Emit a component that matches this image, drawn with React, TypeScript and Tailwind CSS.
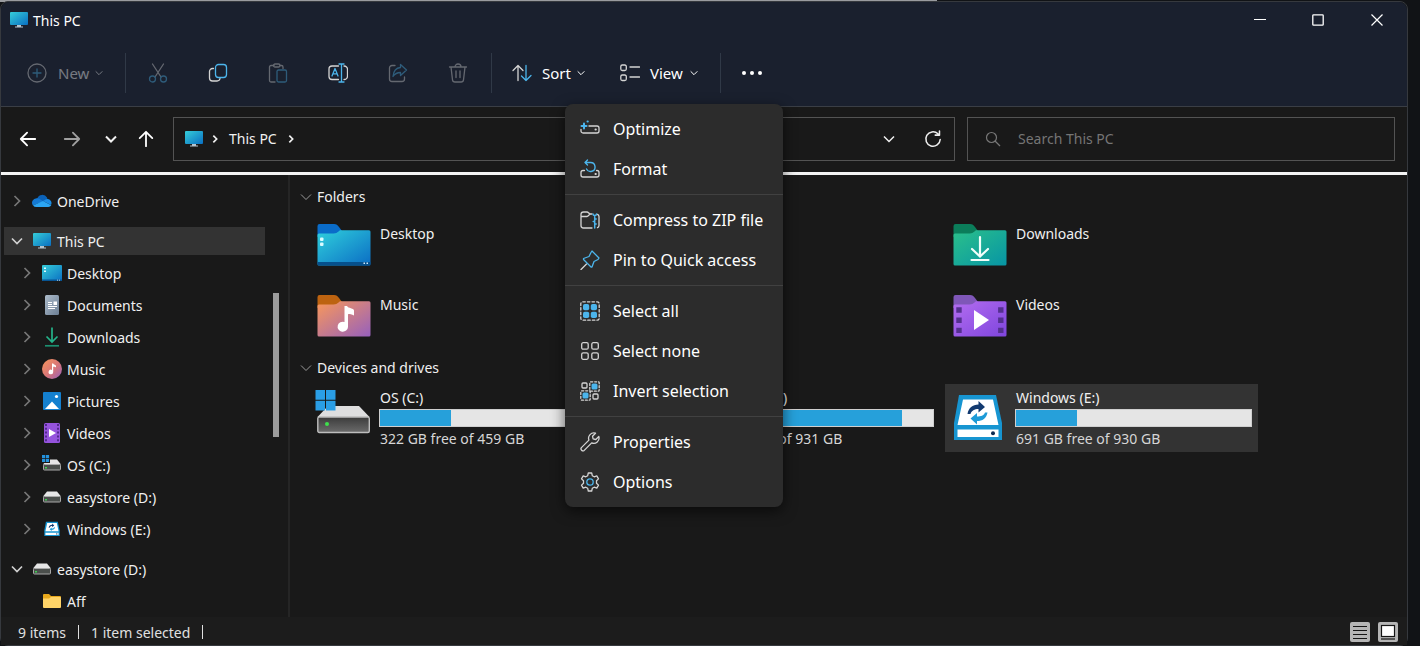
import type { ReactNode } from "react";

type IconProps = { className?: string };

const LINE = "#d4d4d4";
const BLUE = "#4cb5ec";

/* ---------- Small glyphs ---------- */

function Chevron({ className = "", dir = "down" }: IconProps & { dir?: "down" | "right" }) {
  return (
    <svg viewBox="0 0 12 12" className={className} fill="none" stroke="currentColor" aria-hidden="true">
      <path d={dir === "down" ? "M1 3.5 6 8.5 11 3.5" : "M3.5 1 8.5 6 3.5 11"} />
    </svg>
  );
}

function MonitorIcon({ className = "" }: IconProps) {
  return (
    <svg viewBox="0 0 20 18" className={className} aria-hidden="true">
      <defs>
        <linearGradient id="monitor" x1="0" y1="0" x2="1" y2="1">
          <stop offset="0" stopColor="#35cdd9" />
          <stop offset="1" stopColor="#0a6fc2" />
        </linearGradient>
      </defs>
      <rect x="1" y="1" width="18" height="13" rx="1" fill="url(#monitor)" />
      <path d="M8 14h4v1.5h2v1H6v-1h2z" fill="#b5c3cd" />
    </svg>
  );
}

function CloudIcon() {
  return (
    <svg viewBox="0 0 20 14" className="w-5 h-3.5" aria-hidden="true">
      <path d="M5.2 4.5A5.4 5.4 0 0 1 15 3.6l.6 2.2L9 9 2 9z" fill="#0b62b8" />
      <path d="M4.6 4.2A4.6 4.6 0 0 0 1 11.6L11 7.2 7.4 4.8a4.4 4.4 0 0 0-2.8-.6z" fill="#1479d3" />
      <path d="M11 7l2.6-1.5a4 4 0 0 1 2.4-.4A4 4 0 0 1 19 11z" fill="#1b8ce5" />
      <path d="M1 11.5 11 7l8.3 4.3A3.6 3.6 0 0 1 16.3 13H4.6A4.4 4.4 0 0 1 1 11.5z" fill="#2ba5f3" />
    </svg>
  );
}

function DesktopIcon() {
  return (
    <svg viewBox="0 0 20 16" className="w-5 h-4" aria-hidden="true">
      <rect width="20" height="16" rx="1" fill="url(#monitor)" />
      <path d="M2 2.5h2V4H2zM2 5.5h2V7H2z" fill="#e2fbff" />
      <path d="M0 14.5h20v.5a1 1 0 0 1-1 1H1a1 1 0 0 1-1-1z" fill="#075493" />
      <path d="M15 14.8h1v.8h-1zM17 14.8h1v.8h-1z" fill="#fff" />
    </svg>
  );
}

function DocumentIcon() {
  return (
    <svg viewBox="0 0 14 20" className="w-3.5 h-5" aria-hidden="true">
      <defs>
        <linearGradient id="doc" x1="0" y1="0" x2="1" y2="1">
          <stop offset="0" stopColor="#adbccb" />
          <stop offset="1" stopColor="#6c7f94" />
        </linearGradient>
      </defs>
      <rect width="14" height="20" rx="1.5" fill="url(#doc)" />
      <path d="M3 7.5h4M3 9.5h4M3 11.5h9M3 13.5h7" stroke="#fff" strokeWidth="1.2" />
      <rect x="8.5" y="6.5" width="3.5" height="3.5" fill="#fff" />
    </svg>
  );
}

function DownloadIcon() {
  return (
    <svg viewBox="0 0 14 20" className="w-3.5 h-5" fill="none" stroke="#25b38a" strokeWidth="1.7" aria-hidden="true">
      <path d="M7 .5v14M1.5 9.5 7 15l5.500-5.500" />
      <path d="M0 18.8h14" stroke="#1c8f70" />
    </svg>
  );
}

function MusicIcon() {
  return (
    <svg viewBox="0 0 20 20" className="size-5" aria-hidden="true">
      <defs>
        <linearGradient id="music" x1="0" y1="0" x2="1" y2="1">
          <stop offset="0" stopColor="#f9975b" />
          <stop offset=".55" stopColor="#d77579" />
          <stop offset="1" stopColor="#9561c0" />
        </linearGradient>
      </defs>
      <circle cx="10" cy="10" r="10" fill="url(#music)" />
      <path d="M10 4.5h1.2c.3 1.2 2.8 1 2.8 2.5v1.5c-.8-.8-2-.8-2.8-.8V13a2.300 2.300 0 1 1-1.200-2z" fill="#fff" />
    </svg>
  );
}

function PictureIcon() {
  return (
    <svg viewBox="0 0 18 18" className="size-[18px]" aria-hidden="true">
      <rect width="18" height="18" rx="1" fill="#1480cf" />
      <path d="M2 17 9 9.500l7 7.500z" fill="#fff" />
      <circle cx="13.5" cy="4.5" r="1.6" fill="#fff" />
    </svg>
  );
}

function VideoIcon() {
  return (
    <svg viewBox="0 0 16 20" className="w-4 h-5" aria-hidden="true">
      <rect width="16" height="20" rx="1.5" fill="#9553dd" />
      <path d="M2 1v18M14 1v18" stroke="#4b2585" strokeWidth="1.8" strokeDasharray="2 1.8" />
      <path d="M5 6v8l7-4z" fill="#fff" />
    </svg>
  );
}

function SmallDriveIcon({ windows = false }: { windows?: boolean }) {
  return (
    <svg viewBox="0 0 20 20" className="size-5" aria-hidden="true">
      <path d="M5 4.500h10l4 5H1z" fill="#e6e6e6" />
      <rect x="1.5" y="9.5" width="17" height="5.5" rx=".8" fill="#4b4f4c" stroke="#a9a9a9" />
      <rect x="3" y="12" width="2" height="1.5" fill="#3ecf52" />
      {windows && (
        <>
          <rect width="8" height="8" fill="#191919" />
          <path d="M0 0h3.200v3.200H0zM3.900 0h3.200v3.200H3.900zM0 3.900h3.200v3.200H0zM3.900 3.900h3.200v3.200H3.900z" fill="#2492dd" />
        </>
      )}
    </svg>
  );
}

function SyncDriveIcon({ className = "" }: IconProps) {
  return (
    <svg viewBox="0 0 50 46" className={className} aria-hidden="true">
      <path d="M6 0h37l6 28v17H1V28z" fill="#1795d1" />
      <path d="M10 4.500h30l5.500 25.500H4.500zM4.500 34.500h41v7.500h-41z" fill="#fff" />
      <circle cx="40" cy="38.3" r="2" fill="#0c2a52" />
      <path d="M14.500 19c1-6 5-9.500 11-9.500V6L32 12l-6.500 5.500V14c-4 0-7 1.500-8 5z" fill="#123a70" />
      <path d="M34.500 17.500c-1 6-5 8.500-10.500 8.500v3.500L17.500 23.500 24 18v3.500c4 0 7-1 8-4z" fill="#1e9bd7" />
    </svg>
  );
}

function FolderIcon() {
  return (
    <svg viewBox="0 0 18 14" className="w-[18px] h-3.5" aria-hidden="true">
      <path d="M0 1a1 1 0 0 1 1-1h5l2 2h9a1 1 0 0 1 1 1v3H0z" fill="#e8a81c" />
      <path d="M0 4.500h6L8 3h9a1 1 0 0 1 1 1v9a1 1 0 0 1-1 1H1a1 1 0 0 1-1-1z" fill="#ffd468" />
    </svg>
  );
}

/* ---------- Large tile art ---------- */

const FOLDER_COLORS = {
  desktop: { tab: "#0a6cc9", from: "#2fcfdc", to: "#0b6dc4" },
  documents: { tab: "#5d7186", from: "#a9b9c9", to: "#6c7f94" },
  downloads: { tab: "#0b7d5a", from: "#2bc08a", to: "#0795a5" },
  music: { tab: "#bd6310", from: "#f9985a", to: "#9660bd" },
  pictures: { tab: "#0a5ba8", from: "#2ba3ec", to: "#0f6ec0" },
  videos: { tab: "#7f57b8", from: "#b36df0", to: "#7f45dd" },
};

type FolderKind = keyof typeof FOLDER_COLORS;

function BigFolder({ kind }: { kind: FolderKind }) {
  const c = FOLDER_COLORS[kind];
  return (
    <svg viewBox="0 0 54 42" className="w-[54px] h-[42px]" aria-hidden="true">
      <defs>
        <linearGradient id={`folder-${kind}`} x1="0" y1="0" x2="1" y2="1">
          <stop offset="0" stopColor={c.from} />
          <stop offset="1" stopColor={c.to} />
        </linearGradient>
      </defs>
      <path d="M.5 2a2 2 0 0 1 2-2h14.500c2.500 0 3.500 1 5 3l3 4-3 6H.5z" fill={c.tab} />
      <path
        d="M.5 11a1.500 1.500 0 0 1 1.500-1.500h14.500c2.500 0 3.500-.7 5-2L23 6.300h29a1.500 1.500 0 0 1 1.500 1.500V40a1.500 1.500 0 0 1-1.500 1.500H2A1.500 1.500 0 0 1 .5 40z"
        fill={`url(#folder-${kind})`}
      />
      {kind === "desktop" && (
        <>
          <path d="M.5 38h53v2a1.500 1.500 0 0 1-1.500 1.500H2A1.500 1.500 0 0 1 .5 40z" fill="#06508c" />
          <rect x="3" y="13.5" width="3.5" height="3.5" rx="1" fill="#d9fbff" />
          <rect x="3" y="18.5" width="3.5" height="3.5" rx="1" fill="#d9fbff" />
          <path d="M46.500 38.500H48V40h-1.500zM49.500 38.500H51V40h-1.500z" fill="#cde9ff" />
        </>
      )}
      {kind === "downloads" && (
        <path d="M27 13v19M19 25l8 7.500 8-7.500M18.500 36h17" fill="none" stroke="#f2fffb" strokeWidth="2.2" strokeLinecap="round" />
      )}
      {kind === "music" && (
        <path d="M27.500 11h2.500c1 2.500 7 2 7 4.500V20.500c-2-1.500-4.500-1.200-6-1.500v13a5.200 5 0 1 1-3.500-5z" fill="#fff" />
      )}
      {kind === "videos" && (
        <>
          <path d="M6 12.300v28M47.800 12.300v28" stroke="#54308f" strokeWidth="5.4" strokeDasharray="5.4 4.8" />
          <path d="M21 15v20l15-10z" fill="#fff" />
        </>
      )}
    </svg>
  );
}

function BigDrive({ windows = false }: { windows?: boolean }) {
  return (
    <svg viewBox="0 0 56 46" className="w-14 h-[46px]" aria-hidden="true">
      <defs>
        <linearGradient id="drive-front" x1="0" y1="0" x2="0" y2="1">
          <stop offset="0" stopColor="#3b3b3b" />
          <stop offset="1" stopColor="#6b6b6b" />
        </linearGradient>
      </defs>
      <path d="M13 16h31l10.500 11H2.500z" fill="#dededf" />
      <rect x="2.8" y="27" width="51.5" height="15.5" rx="1.5" fill="url(#drive-front)" stroke="#bdbdbd" strokeWidth="1.4" />
      <circle cx="12" cy="34" r="2" fill="#3ee04c" />
      {windows && <path d="M.5 0H10v9.700H.5zM11 0h9.500v9.700H11zM.5 10.700H10v9.700H.5zM11 10.700h9.500v9.700H11z" fill="#2a9ee6" />}
    </svg>
  );
}

/* ---------- Command bar and menu icons ---------- */

function Line({ children, className = "size-5" }: { children: ReactNode; className?: string }) {
  return (
    <svg viewBox="0 0 20 20" className={className} fill="none" stroke={LINE} strokeWidth="1.3" strokeLinecap="round" strokeLinejoin="round" aria-hidden="true">
      {children}
    </svg>
  );
}

const CutIcon = (
  <Line>
    <path d="M4.500 1 13 14M15.500 1 7 14" />
    <circle cx="4.500" cy="16" r="3" stroke={BLUE} />
    <circle cx="15.500" cy="16" r="3" stroke={BLUE} />
  </Line>
);

const CopyIcon = (
  <Line>
    <path d="M5.500 5.500h-1a3 3 0 0 0-3 3V15a3 3 0 0 0 3 3H9a3 3 0 0 0 3-2.500" />
    <rect x="7.5" y="1.5" width="11" height="13" rx="3" stroke={BLUE} />
  </Line>
);

const PasteIcon = (
  <Line>
    <path d="M6 2.500H3A1.500 1.500 0 0 0 1.500 4v13.500A1.500 1.500 0 0 0 3 19h4M12 2.500h1.500A1.500 1.500 0 0 1 15 4v1.500" />
    <rect x="5.5" y="1" width="6.5" height="3" rx="1.5" />
    <rect x="9" y="7" width="9.5" height="12" rx="1.5" stroke={BLUE} />
  </Line>
);

const RenameIcon = (
  <Line>
    <path d="M10.500 3H4a3 3 0 0 0-3 3v7.500a3 3 0 0 0 3 3h6.500M16 3a3.500 3.500 0 0 1 3.500 3.500V13a3.500 3.500 0 0 1-3.500 3.500" />
    <path d="M4 13 7 5.500 10 13M5 10.800h4M13.500 1v18M11 1h5M11 19h5" stroke={BLUE} />
  </Line>
);

const ShareIcon = (
  <Line>
    <path d="M7 2.500H4A2.500 2.500 0 0 0 1.500 5v11A2.500 2.500 0 0 0 4 18.500h10a2.500 2.500 0 0 0 2.500-2.500v-2" />
    <path d="M12.500 1.500 18.500 7l-6 5.500V9.500C9 9.500 7 10.500 5 13.500 5.500 8 8.500 4.800 12.500 4.500z" stroke={BLUE} />
  </Line>
);

const TrashIcon = (
  <Line>
    <path d="M1.500 4h17M3 4l1.500 12.800A2.500 2.500 0 0 0 7 19h6a2.500 2.500 0 0 0 2.500-2.200L17 4M7 4a3 3 0 0 1 6 0M8 8v6.500M12 8v6.500" />
  </Line>
);

const MENU_GROUPS: { label: string; icon: ReactNode }[][] = [
  [
    {
      label: "Optimize",
      icon: (
        <Line>
          <path d="M9 7h8a2 2 0 0 1 2 2v3a2 2 0 0 1-2 2H3a2 2 0 0 1-2-2v-1.500" />
          <path d="M15.500 10.500h.3" strokeWidth="2" />
          <path d="M4 4.500v5M1.500 7h5M7.500 2.500h.3" stroke={BLUE} strokeWidth="2" />
        </Line>
      ),
    },
    {
      label: "Format",
      icon: (
        <Line>
          <path d="M4.500 11.500H3a2 2 0 0 0-2 2V16a2 2 0 0 0 2 2h14a2 2 0 0 0 2-2v-2.500a2 2 0 0 0-2-2h-.5" />
          <path d="M15.500 15h.3" strokeWidth="2" />
          <path d="M5 3.500h5.500a4.500 4.500 0 1 1-4 6.500M7.500 1 5 3.500 7.500 6" stroke={BLUE} strokeWidth="1.4" />
        </Line>
      ),
    },
  ],
  [
    {
      label: "Compress to ZIP file",
      icon: (
        <Line>
          <path d="M12 18H3.500A2.500 2.500 0 0 1 1 15.500v-11A2.500 2.500 0 0 1 3.500 2H7c1.500 0 2 2 3.500 2H12M1 6.500h6c1.500 0 2-2.500 3.500-2.500M17.500 4.300A2.500 2.500 0 0 1 19 6.500v9a2.500 2.500 0 0 1-1.500 2.200" />
          <path d="M13 4c0 2 3.500 2 3.500 0M14.700 5.500V18M14.700 9h1.500M13.200 11.500h1.500M14.700 14h1.500" stroke={BLUE} strokeWidth="1.5" />
        </Line>
      ),
    },
    {
      label: "Pin to Quick access",
      icon: (
        <Line>
          <path d="M1 19.500 6.500 14" />
          <path d="M12 1 19 8l-1 1.500-4 2-2 5.500h-1L3.500 9.500v-1L9 6.500l2-4z" stroke={BLUE} />
        </Line>
      ),
    },
  ],
  [
    {
      label: "Select all",
      icon: (
        <Line>
          <rect x=".8" y=".8" width="18.4" height="18.4" rx="2" strokeDasharray="2.5 2.1" />
          <rect x="3" y="3" width="6.2" height="6.2" rx="1.8" fill={BLUE} stroke="none" />
          <rect x="10.800" y="3" width="6.2" height="6.2" rx="1.8" fill={BLUE} stroke="none" />
          <rect x="3" y="10.8" width="6.2" height="6.2" rx="1.8" fill={BLUE} stroke="none" />
          <rect x="10.8" y="10.8" width="6.2" height="6.2" rx="1.8" fill={BLUE} stroke="none" />
        </Line>
      ),
    },
    {
      label: "Select none",
      icon: (
        <Line>
          <rect x="1.7" y="1.7" width="6.5" height="6.5" rx="1.5" />
          <rect x="11.8" y="1.7" width="6.5" height="6.5" rx="1.5" />
          <rect x="1.7" y="11.8" width="6.5" height="6.5" rx="1.5" />
          <rect x="11.8" y="11.8" width="6.5" height="6.5" rx="1.5" />
        </Line>
      ),
    },
    {
      label: "Invert selection",
      icon: (
        <Line>
          <rect x="2" y="2" width="5" height="5" rx="1" />
          <rect x="13" y="13" width="5" height="5" rx="1" />
          <rect x="9.8" y=".8" width="9.4" height="9.4" rx="1" strokeDasharray="2 1.9" />
          <rect x=".8" y="9.8" width="9.4" height="9.4" rx="1" strokeDasharray="2 1.9" />
          <rect x="11.5" y="2.5" width="6" height="6" rx="1.5" fill={BLUE} stroke="none" />
          <rect x="2.5" y="11.5" width="6" height="6" rx="1.5" fill={BLUE} stroke="none" />
        </Line>
      ),
    },
  ],
  [
    {
      label: "Properties",
      icon: (
        <Line>
          <path d="M15.500 1.200 12.500 4.200l.6 2.700 2.700.6 3-3a5.300 5.300 0 0 1-7.100 6.400l-7.500 7.500a2 2 0 0 1-2.800-2.800l7.500-7.500A5.300 5.300 0 0 1 15.500 1.200z" />
        </Line>
      ),
    },
    {
      label: "Options",
      icon: (
        <Line>
          <path d="M8.300 1h3.400l.6 2.700 1.900 1.100 2.600-.9 1.700 3-2 1.900v2.400l2 1.900-1.700 3-2.600-.9-1.900 1.100-.6 2.700H8.300l-.6-2.700-1.900-1.100-2.600.9-1.700-3 2-1.900V8.800l-2-1.900 1.700-3 2.600.9 1.900-1.100z" />
          <circle cx="10" cy="10" r="3.2" stroke={BLUE} />
        </Line>
      ),
    },
  ],
];

/* ---------- Data ---------- */

const TREE: { label: string; icon: ReactNode; level: 0 | 1; open?: boolean; selected?: boolean; leaf?: boolean }[][] = [
  [{ label: "OneDrive", icon: <CloudIcon />, level: 0 }],
  [
    { label: "This PC", icon: <MonitorIcon className="w-5 h-[18px]" />, level: 0, open: true, selected: true },
    { label: "Desktop", icon: <DesktopIcon />, level: 1 },
    { label: "Documents", icon: <DocumentIcon />, level: 1 },
    { label: "Downloads", icon: <DownloadIcon />, level: 1 },
    { label: "Music", icon: <MusicIcon />, level: 1 },
    { label: "Pictures", icon: <PictureIcon />, level: 1 },
    { label: "Videos", icon: <VideoIcon />, level: 1 },
    { label: "OS (C:)", icon: <SmallDriveIcon windows />, level: 1 },
    { label: "easystore (D:)", icon: <SmallDriveIcon />, level: 1 },
    { label: "Windows (E:)", icon: <SyncDriveIcon className="w-4 h-4" />, level: 1 },
  ],
  [
    { label: "easystore (D:)", icon: <SmallDriveIcon />, level: 0, open: true },
    { label: "Aff", icon: <FolderIcon />, level: 1, leaf: true },
  ],
];

const FOLDERS: { label: string; kind: FolderKind }[] = [
  { label: "Desktop", kind: "desktop" },
  { label: "Documents", kind: "documents" },
  { label: "Downloads", kind: "downloads" },
  { label: "Music", kind: "music" },
  { label: "Pictures", kind: "pictures" },
  { label: "Videos", kind: "videos" },
];

const DRIVES = [
  { label: "OS (C:)", free: "322 GB free of 459 GB", used: 30, icon: <BigDrive windows /> },
  { label: "easystore (D:)", free: "121 GB free of 931 GB", used: 87, icon: <BigDrive /> },
  { label: "Windows (E:)", free: "691 GB free of 930 GB", used: 26, icon: <SyncDriveIcon className="mt-[5px] ml-0.5 w-[50px] h-[46px]" />, selected: true },
];

const TOOLS = [
  { label: "Cut", icon: CutIcon, disabled: true },
  { label: "Copy", icon: CopyIcon },
  { label: "Paste", icon: PasteIcon, disabled: true },
  { label: "Rename", icon: RenameIcon },
  { label: "Share", icon: ShareIcon, disabled: true },
  { label: "Delete", icon: TrashIcon, disabled: true },
];

/* ---------- Sections ---------- */

function TitleBar() {
  return (
    <div className="flex h-9 items-center pl-2 text-white">
      <MonitorIcon className="w-5 h-[18px]" />
      <h1 className="ml-1 text-[14px]">This PC</h1>
      <div className="ml-auto flex h-full">
        <button aria-label="Minimize" className="flex w-[58px] items-center justify-center">
          <svg viewBox="0 0 12 12" className="size-3" stroke="currentColor"><path d="M0 5.500h12" /></svg>
        </button>
        <button aria-label="Maximize" className="flex w-[58px] items-center justify-center">
          <svg viewBox="0 0 12 12" className="size-3" fill="none" stroke="currentColor" strokeWidth="1.3"><rect x=".8" y=".8" width="10.4" height="10.4" rx=".8" /></svg>
        </button>
        <button aria-label="Close" className="flex w-[60px] items-center justify-center">
          <svg viewBox="0 0 12 12" className="size-3" stroke="currentColor" strokeWidth="1.2"><path d="M.5.5l11 11M11.500.5l-11 11" /></svg>
        </button>
      </div>
    </div>
  );
}

function Toolbar() {
  return (
    <div className="flex h-[68px] items-center pt-0.5 pl-[15px] text-[15px] text-white">
      <button disabled className="flex h-10 w-[109px] items-center pl-[11px] opacity-40">
        <Line>
          <circle cx="10" cy="10" r="9" />
          <path d="M10 6v8M6 10h8" stroke={BLUE} />
        </Line>
        <span className="ml-[11px]">New</span>
        <Chevron className="ml-1.5 size-2 stroke-[1.5]" />
      </button>
      <span className="h-10 w-px bg-[#303947]" />
      <div className="flex px-0.5">
        {TOOLS.map((tool) => (
          <button key={tool.label} aria-label={tool.label} disabled={tool.disabled} className="flex h-10 w-[60px] items-center justify-center disabled:opacity-40">
            {tool.icon}
          </button>
        ))}
      </div>
      <span className="ml-px h-10 w-px bg-[#303947]" />
      <button className="ml-2 flex h-10 w-[108px] items-center pl-3">
        <Line>
          <path d="M6 17.500v-15M1 7.500l5-5 5 5" />
          <path d="M14 2.500v15M9.500 13l4.500 4.500 5-5" stroke={BLUE} />
        </Line>
        <span className="ml-2.5">Sort</span>
        <Chevron className="ml-1.5 size-2 stroke-[1.5]" />
      </button>
      <button className="flex h-10 w-[108px] items-center pl-3">
        <Line>
          <rect x=".8" y="2" width="5.5" height="5.5" rx="1.5" />
          <rect x=".8" y="12" width="5.5" height="5.5" rx="1.5" />
          <path d="M10 4h9.500M10 14h9.500" />
        </Line>
        <span className="ml-2.5">View</span>
        <Chevron className="ml-[7px] size-2 stroke-[1.5]" />
      </button>
      <span className="ml-1 h-10 w-px bg-[#303947]" />
      <button aria-label="See more" aria-haspopup="menu" aria-expanded="true" className="ml-2 flex h-10 w-[46px] items-center justify-center">
        <svg viewBox="0 0 20 4" className="h-1 w-5" fill="currentColor">
          <circle cx="2" cy="2" r="2" />
          <circle cx="10" cy="2" r="2" />
          <circle cx="18" cy="2" r="2" />
        </svg>
      </button>
    </div>
  );
}

function AddressRow() {
  return (
    <div className="flex h-[65px] items-center pr-3 pb-0.5 text-[14px] text-[#f1f1f1]">
      <div className="flex w-[172px] items-center pl-[18px]">
        <button aria-label="Back" className="w-[44px]">
          <Line className="size-[18px]"><path d="M18 10H2M9 3l-7 7 7 7" stroke="#fff" strokeWidth="2" /></Line>
        </button>
        <button aria-label="Forward" className="w-[42px]">
          <Line className="size-[18px]"><path d="M2 10h16M11 3l7 7-7 7" stroke="#a0a0a0" strokeWidth="2" /></Line>
        </button>
        <button aria-label="Recent locations" className="w-[32px]">
          <Chevron className="size-3 stroke-2" />
        </button>
        <button aria-label="Up">
          <Line className="size-[18px]"><path d="M10 18V2M3 9l7-7 7 7" stroke="#fff" strokeWidth="2" /></Line>
        </button>
      </div>
      <div className="flex h-11 flex-1 items-center border border-[#535353] pl-2.5">
        <MonitorIcon className="w-5 h-[18px]" />
        <Chevron dir="right" className="ml-[7px] size-2 stroke-[2.5]" />
        <a href="#this-pc" className="mx-2.5">This PC</a>
        <Chevron dir="right" className="size-2 stroke-[2.5]" />
        <button aria-label="Previous locations" className="ml-auto w-[41px]">
          <Chevron className="size-3 stroke-[1.5]" />
        </button>
        <button aria-label="Refresh" className="w-[30px]">
          <Line className="size-[18px]">
            <path d="M18 10.500A8 8 0 1 1 15.500 4.200L17 5.500M17.200 1v4.700h-4.700" stroke="#eee" strokeWidth="1.7" />
          </Line>
        </button>
      </div>
      <label className="ml-3 flex h-11 w-[428px] items-center border border-[#535353] pl-[17px]">
        <svg viewBox="0 0 16 16" className="size-4" fill="none" stroke="#777" strokeWidth="1.2" aria-hidden="true">
          <circle cx="6.5" cy="6.5" r="5" />
          <path d="m10 10 5 5" />
        </svg>
        <input aria-label="Search This PC" placeholder="Search This PC" className="ml-[17px] min-w-0 flex-1 bg-transparent outline-none placeholder:text-[#757575]" />
      </label>
    </div>
  );
}

function Sidebar() {
  return (
    <aside className="flex w-[289px] shrink-0 border-r-2 border-[#252525] pl-[3px]">
      <nav className="w-[261px] space-y-2 pt-2.5 text-[14px]">
        {TREE.map((group, i) => (
          <ul key={i}>
            {group.map((item) => (
              <li key={item.label} className="py-0.5">
                <button
                  className={`flex h-7 w-full items-center gap-[5px] text-left ${item.level ? "pl-[15px]" : "pl-[5px]"} ${
                    item.selected ? "bg-[#333333]" : ""
                  }`}
                >
                  <span className={`flex w-[18px] pl-0.5 ${item.open ? "text-[#d0d0d0]" : "text-[#777]"}`}>
                    {!item.leaf && <Chevron dir={item.open ? "down" : "right"} className="size-3 stroke-[1.7]" />}
                  </span>
                  <span className="flex w-5 shrink-0 justify-center">{item.icon}</span>
                  <span>{item.label}</span>
                </button>
              </li>
            ))}
          </ul>
        ))}
      </nav>
      <div className="mt-[118px] ml-2 h-36 w-1.5 bg-[#9b9b9b]" />
    </aside>
  );
}

function SectionTitle({ children }: { children: ReactNode }) {
  return (
    <h2 className="mb-1.5 flex h-5 items-center gap-[5px] pl-2.5 text-[14px]">
      <Chevron className="size-3 text-[#9a9a9a]" />
      {children}
    </h2>
  );
}

function Content() {
  return (
    <main className="flex-1 pt-3 text-[14px] leading-5">
      <SectionTitle>Folders</SectionTitle>
      <div className="mb-1.5 grid grid-cols-[repeat(auto-fill,313px)] gap-x-[5px] gap-y-[3px] pl-[19px]">
        {FOLDERS.map((folder) => (
          <div key={folder.label} className="flex h-[68px] gap-[9px] pt-[11px] pl-2">
            <BigFolder kind={folder.kind} />
            <span>{folder.label}</span>
          </div>
        ))}
      </div>
      <SectionTitle>Devices and drives</SectionTitle>
      <div className="grid grid-cols-[repeat(auto-fill,313px)] gap-x-[5px] pl-[19px]">
        {DRIVES.map((drive) => (
          <div key={drive.label} className={`flex h-[68px] pt-1 pr-1.5 pl-1.5 ${drive.selected ? "bg-[#333333]" : ""}`}>
            <div className="w-16 shrink-0 pt-0.5">{drive.icon}</div>
            <div className="flex-1">
              <p className="pl-px">{drive.label}</p>
              <div className="mt-px h-[18px] border border-[#cfcfcf] bg-[#e5e5e5]">
                <div className="h-full bg-[#26a0da]" style={{ width: `${drive.used}%` }} />
              </div>
              <p className="mt-0.5 pl-px text-[#d6d6d6]">{drive.free}</p>
            </div>
          </div>
        ))}
      </div>
    </main>
  );
}

function StatusBar() {
  return (
    <footer className="flex h-7 items-center bg-[#1c1c1c] pt-0.5 pl-[17px] text-[14px] text-[#e0e0e0]">
      <span>9 items</span>
      <span className="mx-3 h-3.5 w-px bg-[#e0e0e0]" />
      <span>1 item selected</span>
      <span className="mx-3 h-3.5 w-px bg-[#e0e0e0]" />
      <div className="ml-auto flex gap-2 pr-[9px]">
        <button aria-label="Details view" className="rounded-xs bg-[#b5b5b5]">
          <svg viewBox="0 0 20 20" className="size-5" stroke="#151515" strokeWidth="1.2"><path d="M3 4.500h14M3 8.500h14M3 12.500h14M3 16.500h14" /></svg>
        </button>
        <button aria-label="Large icons view" className="rounded-xs bg-[#b5b5b5]">
          <svg viewBox="0 0 20 20" className="size-5" stroke="#151515" strokeWidth="1.2"><rect x="3.5" y="3.5" width="13" height="11" fill="#fff" /><path d="M3 17h14" /></svg>
        </button>
      </div>
    </footer>
  );
}

function MoreMenu() {
  return (
    <div role="menu" className="absolute top-[102px] left-[564px] w-[218px] rounded-lg bg-[#2c2c2c] py-[5px] text-[16px] text-white shadow-[0_4px_14px_rgba(0,0,0,0.6)]">
      {MENU_GROUPS.map((group, i) => (
        <div key={i}>
          {i > 0 && <div role="separator" className="my-[5px] h-px bg-[#414141]" />}
          {group.map((item) => (
            <button key={item.label} role="menuitem" className="flex h-10 w-full items-center gap-[13px] pl-[15px] text-left whitespace-nowrap">
              {item.icon}
              <span>{item.label}</span>
            </button>
          ))}
        </div>
      ))}
    </div>
  );
}

export default function App() {
  return (
    <div className="flex min-h-screen flex-col bg-[#111316] font-['Noto_Sans','Open_Sans',sans-serif]">
      <div className="-mb-px h-0.5 w-[66%] bg-[#999b9f]" />
      <div className="relative mr-3 flex flex-1 flex-col rounded-lg border border-[#36393e] bg-[#191919] text-[#f0f0f0]">
        <header className="rounded-t-lg border-b border-[#3a3e45] bg-[#1a202e]">
          <TitleBar />
          <Toolbar />
        </header>
        <AddressRow />
        <div className="h-[3px] bg-[#f3f3f3]" />
        <div className="flex flex-1">
          <Sidebar />
          <Content />
        </div>
        <StatusBar />
        <MoreMenu />
      </div>
    </div>
  );
}
